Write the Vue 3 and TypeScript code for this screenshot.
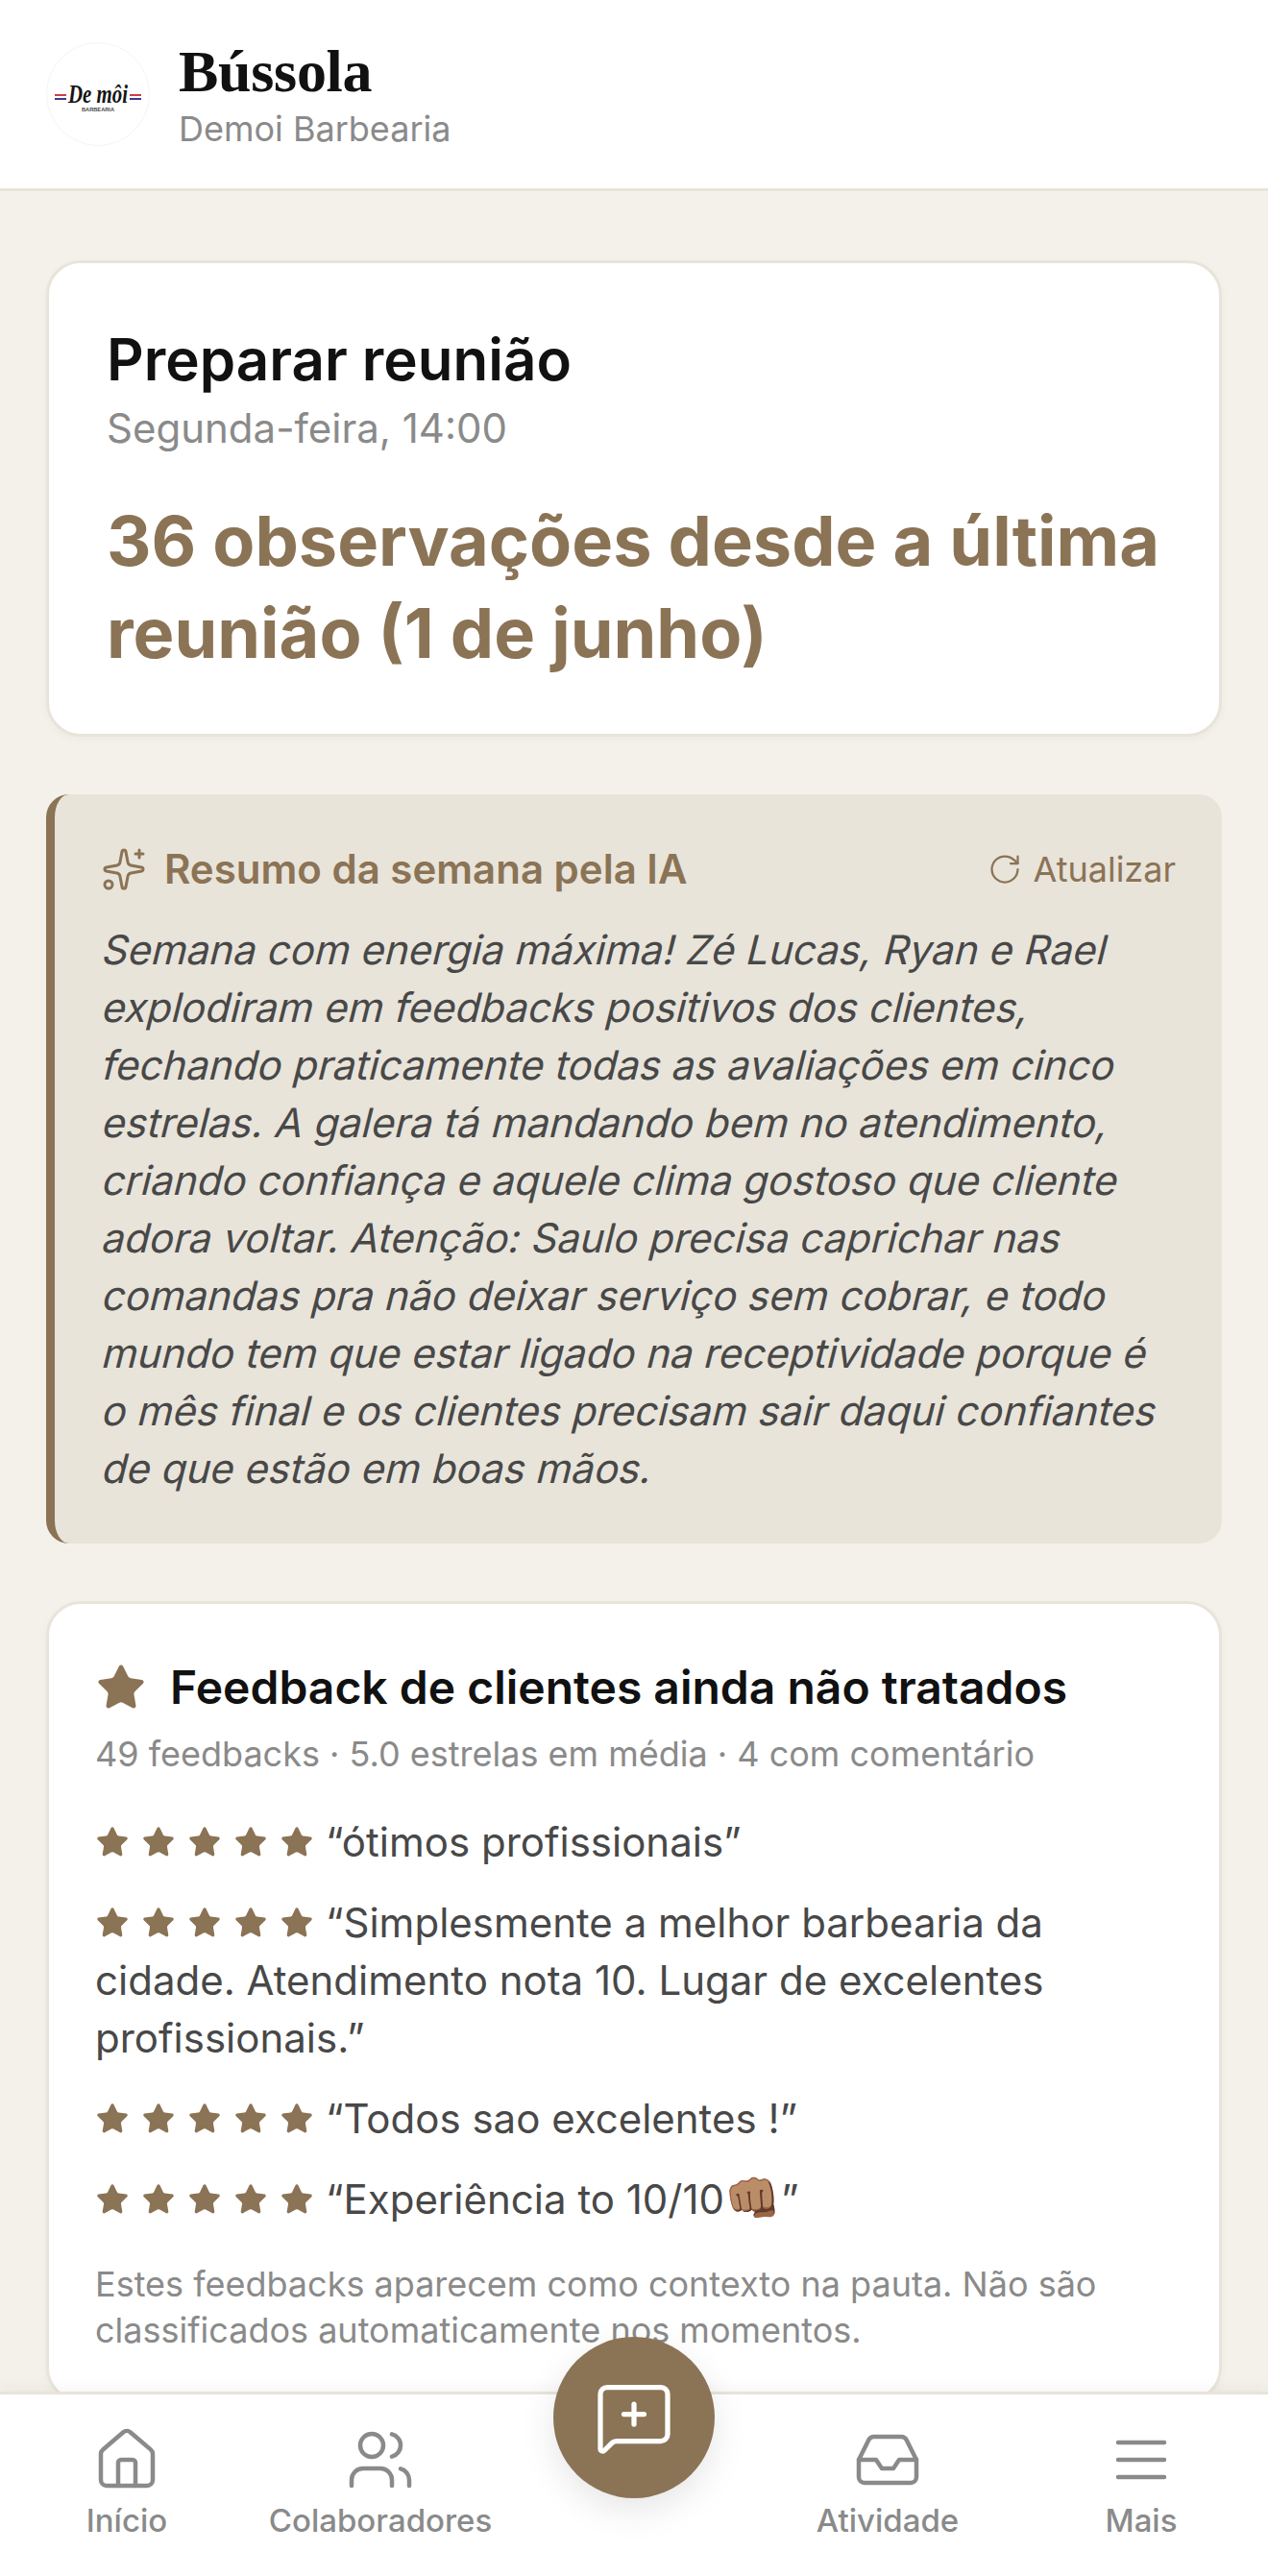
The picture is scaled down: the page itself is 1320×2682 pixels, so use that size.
<script setup lang="ts">
const quotes = [
  { text: '“ótimos profissionais”' },
  { text: '“Simplesmente a melhor barbearia da cidade. Atendimento nota 10. Lugar de excelentes profissionais.”' },
  { text: '“Todos sao excelentes !”' },
  { text: '“Experiência to 10/10', emoji: '👊🏽', end: '”' },
]
const summaryLines = [
  'Semana com energia máxima! Zé Lucas, Ryan e Rael',
  'explodiram em feedbacks positivos dos clientes,',
  'fechando praticamente todas as avaliações em cinco',
  'estrelas. A galera tá mandando bem no atendimento,',
  'criando confiança e aquele clima gostoso que cliente',
  'adora voltar. Atenção: Saulo precisa caprichar nas',
  'comandas pra não deixar serviço sem cobrar, e todo',
  'mundo tem que estar ligado na receptividade porque é',
  'o mês final e os clientes precisam sair daqui confiantes',
  'de que estão em boas mãos.',
]
const starPath =
  'M11.525 2.295a.53.53 0 0 1 .95 0l2.31 4.679a2.123 2.123 0 0 0 1.595 1.16l5.166.756a.53.53 0 0 1 .294.904l-3.736 3.638a2.123 2.123 0 0 0-.611 1.878l.882 5.14a.53.53 0 0 1-.771.56l-4.618-2.428a2.122 2.122 0 0 0-1.973 0L6.396 21.01a.53.53 0 0 1-.77-.56l.881-5.139a2.122 2.122 0 0 0-.611-1.879L2.16 9.795a.53.53 0 0 1 .294-.906l5.165-.755a2.122 2.122 0 0 0 1.597-1.16z'
</script>

<template>
  <div class="app">
    <header class="topbar">
      <svg class="logo" viewBox="0 0 108 108">
        <circle cx="54" cy="54" r="53.5" fill="#fff" stroke="#f4f4f2" />
        <rect x="9" y="54" width="12" height="2" fill="#c8404a" />
        <rect x="9" y="58" width="12" height="2" fill="#3f3a8c" />
        <rect x="87" y="54" width="12" height="2" fill="#c8404a" />
        <rect x="87" y="58" width="12" height="2" fill="#3f3a8c" />
        <text x="23" y="63" textLength="62" lengthAdjust="spacingAndGlyphs" class="logo-script">De môi</text>
        <text x="37" y="72" textLength="34" lengthAdjust="spacingAndGlyphs" class="logo-small">BARBEARIA</text>
      </svg>
      <div>
        <h1 class="brand">Bússola</h1>
        <p class="org">Demoi Barbearia</p>
      </div>
    </header>

    <main class="content">
      <section class="card meeting">
        <h2 class="meeting-title">Preparar reunião</h2>
        <p class="meeting-when">Segunda-feira, 14:00</p>
        <p class="meeting-count">36 observações desde a última reunião (1 de junho)</p>
      </section>

      <section class="summary">
        <div class="summary-head">
          <div class="summary-title">
            <svg class="icon-48" viewBox="0 0 24 24">
              <path d="M11.017 2.814a1 1 0 0 1 1.966 0l1.051 5.558a2 2 0 0 0 1.594 1.594l5.558 1.051a1 1 0 0 1 0 1.966l-5.558 1.051a2 2 0 0 0-1.594 1.594l-1.051 5.558a1 1 0 0 1-1.966 0l-1.051-5.558a2 2 0 0 0-1.594-1.594l-5.558-1.051a1 1 0 0 1 0-1.966l5.558-1.051a2 2 0 0 0 1.594-1.594z" />
              <path d="M20 2v4M22 4h-4" />
              <circle cx="4" cy="20" r="2" />
            </svg>
            <span>Resumo da semana pela IA</span>
          </div>
          <button class="refresh">
            <svg class="icon-36" viewBox="0 0 24 24">
              <path d="M21 12a9 9 0 1 1-9-9c2.52 0 4.93 1 6.74 2.74L21 8" />
              <path d="M21 3v5h-5" />
            </svg>
            Atualizar
          </button>
        </div>
        <p class="summary-text">
          <span v-for="line in summaryLines" :key="line">{{ line }}</span>
        </p>
      </section>

      <section class="card feedback">
        <div class="feedback-head">
          <svg class="icon-54" viewBox="0 0 24 24"><path :d="starPath" /></svg>
          <h3>Feedback de clientes ainda não tratados</h3>
        </div>
        <p class="feedback-meta">49 feedbacks · 5.0 estrelas em média · 4 com comentário</p>
        <p v-for="q in quotes" :key="q.text" class="quote">
          <span class="stars">
            <svg v-for="n in 5" :key="n" viewBox="0 0 24 24"><path :d="starPath" /></svg>
          </span>{{ q.text }}<span v-if="q.emoji" class="emoji">{{ q.emoji }}</span>{{ q.end }}
        </p>
        <p class="feedback-note">Estes feedbacks aparecem como contexto na pauta. Não são classificados automaticamente nos momentos.</p>
      </section>
    </main>

    <nav class="tabbar">
      <a class="tab">
        <svg viewBox="0 0 24 24">
          <path d="M15 21v-8a1 1 0 0 0-1-1h-4a1 1 0 0 0-1 1v8" />
          <path d="M3 10a2 2 0 0 1 .709-1.528l7-5.999a2 2 0 0 1 2.582 0l7 5.999A2 2 0 0 1 21 10v9a2 2 0 0 1-2 2H5a2 2 0 0 1-2-2z" />
        </svg>
        Início
      </a>
      <a class="tab">
        <svg viewBox="0 0 24 24">
          <path d="M16 21v-2a4 4 0 0 0-4-4H6a4 4 0 0 0-4 4v2" />
          <circle cx="9" cy="7" r="4" />
          <path d="M22 21v-2a4 4 0 0 0-3-3.87" />
          <path d="M16 3.13a4 4 0 0 1 0 7.75" />
        </svg>
        Colaboradores
      </a>
      <span></span>
      <a class="tab">
        <svg viewBox="0 0 24 24">
          <polyline points="22 12 16 12 14 15 10 15 8 12 2 12" />
          <path d="M5.45 5.11 2 12v6a2 2 0 0 0 2 2h16a2 2 0 0 0 2-2v-6l-3.45-6.89A2 2 0 0 0 16.76 4H7.24a2 2 0 0 0-1.79 1.11z" />
        </svg>
        Atividade
      </a>
      <a class="tab">
        <svg viewBox="0 0 24 24">
          <path d="M4 6h16M4 12h16M4 18h16" />
        </svg>
        Mais
      </a>
      <button class="fab">
        <svg viewBox="0 0 24 24">
          <path d="M22 17a2 2 0 0 1-2 2H6.828a2 2 0 0 0-1.414.586l-2.202 2.202A.71.71 0 0 1 2 21.286V5a2 2 0 0 1 2-2h16a2 2 0 0 1 2 2z" />
          <path d="M12 8v6M9 11h6" />
        </svg>
      </button>
    </nav>
  </div>
</template>

<style>
html, body { background: #f4f1ea; }
</style>

<style scoped>
.app {
  display: flex;
  flex-direction: column;
  height: 2682px;
  overflow: hidden;
  background: #f4f1ea;
  font-family: Inter, "Noto Sans", sans-serif;
}

svg {
  fill: none;
  stroke: currentColor;
  stroke-linecap: round;
  stroke-linejoin: round;
  flex: none;
}

.topbar {
  display: flex;
  align-items: center;
  gap: 30px;
  flex: none;
  height: 199px;
  box-sizing: border-box;
  padding: 0 48px;
  background: #fff;
  border-bottom: 3px solid #e8e4da;
}

.logo { width: 108px; height: 108px; stroke: none; }
.logo-script {
  font: italic bold 27px "Liberation Serif", serif;
  fill: #151515;
}
.logo-small {
  font: bold 5.5px "Liberation Sans", sans-serif;
  fill: #444;
}

.brand {
  margin: 0;
  font: 700 62px/72px "Liberation Serif", serif;
  letter-spacing: -0.3px;
  color: #111;
}
.org {
  margin: 0;
  font-size: 36px;
  line-height: 48px;
  color: #8a8a8a;
}

.content {
  flex: 1;
  min-height: 0;
  overflow: hidden;
  display: flex;
  flex-direction: column;
  gap: 60px;
  padding: 72px 48px 0;
}

.card {
  flex: none;
  background: #fff;
  border: 3px solid #e8e4da;
  border-radius: 36px;
  box-shadow: 0 3px 9px rgba(0, 0, 0, 0.03);
}

.meeting { padding: 58px 60px 57px; }
.meeting-title {
  margin: 0;
  font-size: 60px;
  line-height: 84px;
  font-weight: 600;
  color: #111;
}
.meeting-when {
  margin: 0 0 39px;
  font-size: 42px;
  line-height: 60px;
  color: #8a8a8a;
}
.meeting-count {
  margin: 0;
  font-size: 72px;
  line-height: 96px;
  font-weight: 700;
  color: #8b7355;
}

.summary {
  flex: none;
  padding: 48px;
  background: #e8e4da;
  border-left: 9px solid #8b7355;
  border-radius: 24px;
}
.summary-head {
  display: flex;
  align-items: center;
  justify-content: space-between;
  margin-bottom: 24px;
}
.summary-title {
  display: flex;
  align-items: center;
  gap: 18px;
  font-size: 42px;
  line-height: 60px;
  font-weight: 600;
  color: #8b7355;
}
.icon-48 { width: 48px; height: 48px; stroke-width: 1.5; }
.icon-36 { width: 36px; height: 36px; stroke-width: 1.5; }
.icon-54 { width: 54px; height: 54px; fill: #8b7355; color: #8b7355; }

.refresh {
  display: flex;
  align-items: center;
  gap: 12px;
  padding: 0;
  border: 0;
  background: none;
  font: 36px Inter, sans-serif;
  color: #8b7355;
}
.summary-text {
  margin: 0;
  font-size: 42px;
  line-height: 60px;
  color: #484848;
}
.summary-text span {
  display: block;
  white-space: nowrap;
  transform: skewX(-14deg);
  transform-origin: 0 70%;
}

.feedback { padding: 51px 48px 48px; }
.feedback-head {
  display: flex;
  align-items: center;
  gap: 24px;
}
.feedback-head h3 {
  margin: 0;
  font-size: 48px;
  line-height: 72px;
  font-weight: 600;
  color: #111;
}
.feedback-meta {
  margin: 9px 0 38px;
  font-size: 36px;
  line-height: 48px;
  color: #8a8a8a;
}
.quote {
  margin: 0 0 24px;
  font-size: 42px;
  line-height: 60px;
  color: #484848;
}
.stars {
  display: inline-flex;
  gap: 12px;
  margin-right: 12px;
  vertical-align: -3px;
}
.stars svg { width: 36px; height: 36px; fill: #8b7355; color: #8b7355; }
.emoji { font-size: 47px; line-height: 1; }
.feedback-note {
  margin: 34px 0 0;
  font-size: 36px;
  line-height: 48px;
  color: #8a8a8a;
}

.tabbar {
  position: relative;
  flex: none;
  display: grid;
  grid-template-columns: repeat(5, 264px);
  height: 192px;
  box-sizing: border-box;
  padding-top: 32px;
  background: #fff;
  border-top: 3px solid #e8e4da;
  box-shadow: 0 -6px 12px rgba(0, 0, 0, 0.03);
}
.tab {
  display: flex;
  flex-direction: column;
  align-items: center;
  gap: 6px;
  font-size: 33px;
  line-height: 42px;
  font-weight: 500;
  color: #8a8a8a;
}
.tab svg { width: 72px; height: 72px; stroke-width: 1.5; }

.fab {
  position: absolute;
  left: 576px;
  top: -60px;
  display: flex;
  align-items: center;
  justify-content: center;
  width: 168px;
  height: 168px;
  padding: 0;
  border: 0;
  border-radius: 50%;
  background: #8b7355;
  color: #fff;
  box-shadow: 0 12px 36px rgba(0, 0, 0, 0.1);
}
.fab svg { width: 84px; height: 84px; stroke-width: 1.5; }
</style>
